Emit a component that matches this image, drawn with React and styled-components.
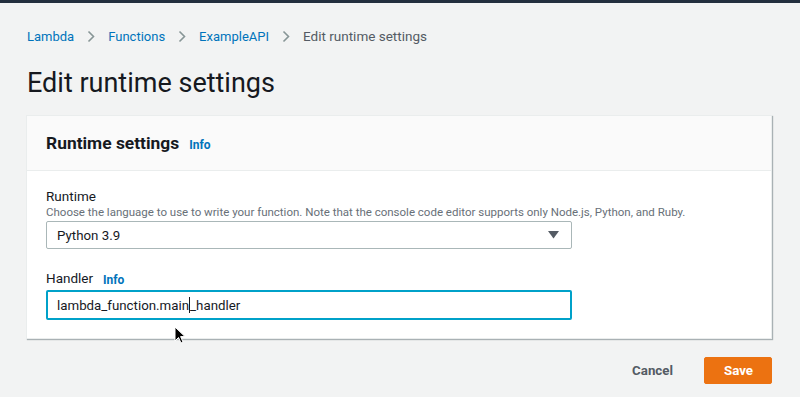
import React from "react";
import styled, { createGlobalStyle } from "styled-components";

const Global = createGlobalStyle`
  html, body { margin: 0; padding: 0; background: #f2f3f3; }
  body { font-family: Roboto, "Noto Sans", sans-serif; color: #16191f; }
  * { box-sizing: border-box; }
`;

const Page = styled.div`
  position: relative;
  width: 800px;
  height: 397px;
  overflow: hidden;
  background: #f2f3f3;
  border-top: 3px solid #232f3e;
`;

const Main = styled.div`
  padding: 0 28px 0 26px;
  display: flex;
  flex-direction: column;
`;

const Crumbs = styled.nav`
  display: flex;
  align-items: center;
  height: 20px;
  margin-top: 23px;
  padding-left: 1px;
  font-size: 13px;
`;

const Crumb = styled.span`
  color: ${(p) => (p.$current ? "#545b64" : "#0073bb")};
  font-size: ${(p) => (p.$current ? "13.5px" : "13px")};
`;

const Chevron = styled.span`
  display: inline-flex;
  width: 34px;
  justify-content: center;
  color: #879596;
`;

const Title = styled.h1`
  margin: 22px 0 0 1px;
  font-size: 27px;
  font-weight: 400;
  line-height: 30px;
  color: #16191f;
`;

const Panel = styled.section`
  margin-top: 17px;
  background: #fff;
  border: 1px solid #eaeded;
  box-shadow: 1px 1px 1px 0 rgba(0, 28, 36, 0.3);
  display: flex;
  flex-direction: column;
`;

const PanelHeader = styled.header`
  height: 55px;
  background: #fafafa;
  border-bottom: 1px solid #eaeded;
  display: flex;
  align-items: center;
  padding-left: 19px;
  gap: 10px;
`;

const PanelTitle = styled.h2`
  margin: 0;
  font-size: 17.4px;
  font-weight: 700;
  color: #16191f;
`;

const Info = styled.span`
  font-size: 12px;
  font-weight: 700;
  color: #0073bb;
  margin-top: 3px;
`;

const PanelBody = styled.div`
  padding: 16px 19px 18px;
  display: flex;
  flex-direction: column;
  gap: 20px;
`;

const Field = styled.div`
  display: flex;
  flex-direction: column;
`;

const LabelRow = styled.div`
  display: flex;
  align-items: center;
  gap: 10px;
  height: 18px;
`;

const Label = styled.label`
  font-size: 13.5px;
  color: #16191f;
`;

const Desc = styled.div`
  font-size: 11.5px;
  color: #687078;
  line-height: 14px;
  margin-bottom: 2px;
`;

const Select = styled.div`
  width: 526px;
  height: 28px;
  border: 1px solid #aab7b8;
  border-radius: 2px;
  display: flex;
  align-items: center;
  justify-content: space-between;
  padding: 0 12px 0 10px;
  font-size: 13.3px;
  color: #16191f;
`;

const Input = styled.div`
  width: 526px;
  height: 30px;
  border: 2px solid #00a1c9;
  border-radius: 2px;
  display: flex;
  align-items: center;
  padding: 0 9px;
  font-size: 13.3px;
  color: #16191f;
  margin-top: 3px;
`;

const Caret = styled.span`
  display: inline-block;
  width: 1px;
  height: 16px;
  background: #16191f;
  vertical-align: middle;
`;

const Actions = styled.div`
  display: flex;
  justify-content: flex-end;
  align-items: center;
  gap: 30px;
  margin-top: 18px;
`;

const Button = styled.button`
  font-family: inherit;
  font-size: 13.3px;
  font-weight: 700;
  height: 27px;
  border-radius: 2px;
  cursor: pointer;
  border: 1px solid ${(p) => (p.$primary ? "#ec7211" : "transparent")};
  background: ${(p) => (p.$primary ? "#ec7211" : "transparent")};
  color: ${(p) => (p.$primary ? "#fff" : "#545b64")};
  padding: ${(p) => (p.$primary ? "0 19px" : "0")};
  width: ${(p) => (p.$primary ? "68px" : "auto")};
`;

const Pointer = styled.svg`
  position: absolute;
  left: 174px;
  top: 323px;
`;

const ChevronIcon = () => (
  <svg width="8" height="13" viewBox="0 0 8 13">
    <path d="M1.5 1.5 L6.5 6.5 L1.5 11.5" fill="none" stroke="#879596" strokeWidth="1.6" />
  </svg>
);

export default function App() {
  return (
    <>
      <Global />
      <Page>
        <Main>
          <Crumbs>
            <Crumb>Lambda</Crumb>
            <Chevron><ChevronIcon /></Chevron>
            <Crumb>Functions</Crumb>
            <Chevron><ChevronIcon /></Chevron>
            <Crumb>ExampleAPI</Crumb>
            <Chevron><ChevronIcon /></Chevron>
            <Crumb $current>Edit runtime settings</Crumb>
          </Crumbs>
          <Title>Edit runtime settings</Title>
          <Panel>
            <PanelHeader>
              <PanelTitle>Runtime settings</PanelTitle>
              <Info>Info</Info>
            </PanelHeader>
            <PanelBody>
              <Field>
                <LabelRow>
                  <Label>Runtime</Label>
                </LabelRow>
                <Desc>
                  Choose the language to use to write your function. Note that the console code editor supports only Node.js, Python, and Ruby.
                </Desc>
                <Select>
                  <span>Python 3.9</span>
                  <svg width="11" height="8" viewBox="0 0 11 8">
                    <path d="M0 0 H11 L5.5 7.5 Z" fill="#545b64" />
                  </svg>
                </Select>
              </Field>
              <Field>
                <LabelRow>
                  <Label>Handler</Label>
                  <Info>Info</Info>
                </LabelRow>
                <Input>
                  <span>lambda_function.main</span>
                  <Caret />
                  <span>_handler</span>
                </Input>
              </Field>
            </PanelBody>
          </Panel>
          <Actions>
            <Button>Cancel</Button>
            <Button $primary>Save</Button>
          </Actions>
        </Main>
        <Pointer width="12" height="19" viewBox="0 0 12 19">
          <path d="M1 1 L1 15 L4.5 11.5 L7 17 L9 16 L6.6 10.6 L11 10.6 Z" fill="#000" stroke="#fff" strokeWidth="1" />
        </Pointer>
      </Page>
    </>
  );
}
